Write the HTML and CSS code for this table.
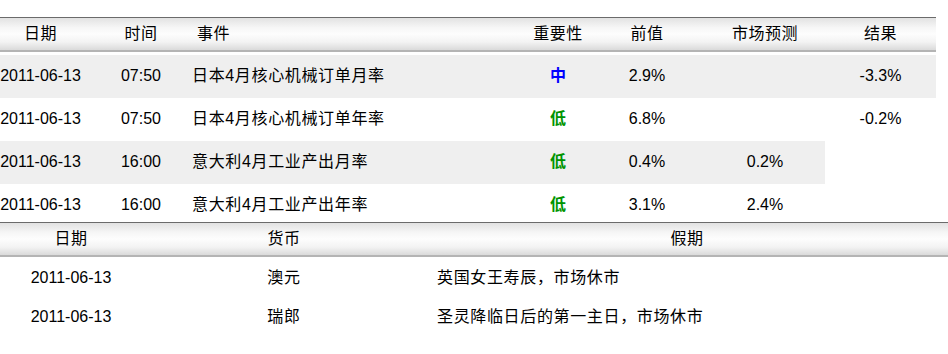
FILE: index.html
```html
<!DOCTYPE html>
<html lang="zh-CN">
<head>
<meta charset="utf-8">
<title>财经日历</title>
<link rel="stylesheet" href="styles.css">
</head>
<body>
<div class="events">
  <div class="ev-row head">
    <span>日期</span><span>时间</span><span class="ev-name">事件</span><span>重要性</span><span>前值</span><span>市场预测</span><span>结果</span>
  </div>
  <div class="ev-row alt">
    <span>2011-06-13</span><span>07:50</span><span class="ev-name">日本4月核心机械订单月率</span><span class="lvl mid">中</span><span>2.9%</span><span></span><span>-3.3%</span>
  </div>
  <div class="ev-row">
    <span>2011-06-13</span><span>07:50</span><span class="ev-name">日本4月核心机械订单年率</span><span class="lvl low">低</span><span>6.8%</span><span></span><span>-0.2%</span>
  </div>
  <div class="ev-row alt">
    <span>2011-06-13</span><span>16:00</span><span class="ev-name">意大利4月工业产出月率</span><span class="lvl low">低</span><span>0.4%</span><span>0.2%</span>
  </div>
  <div class="ev-row last">
    <span>2011-06-13</span><span>16:00</span><span class="ev-name">意大利4月工业产出年率</span><span class="lvl low">低</span><span>3.1%</span><span>2.4%</span>
  </div>
</div>
<div class="holidays">
  <div class="hd-row head">
    <span>日期</span><span>货币</span><span>假期</span>
  </div>
  <div class="hd-row">
    <span>2011-06-13</span><span class="cjk">澳元</span><span class="hd-name cjk">英国女王寿辰，市场休市</span>
  </div>
  <div class="hd-row">
    <span>2011-06-13</span><span class="cjk">瑞郎</span><span class="hd-name cjk">圣灵降临日后的第一主日，市场休市</span>
  </div>
</div>
</body>
</html>
```
FILE: styles.css
```css
html, body {
  margin: 0;
  padding: 0;
  background: #fff;
}
body {
  font-family: "Liberation Sans", "Noto Sans CJK SC", sans-serif;
  font-size: 16px;
  color: #000;
  overflow: hidden;
}
.events {
  margin: 17px 0 0 -19px;
  width: 955px;
}
.ev-row {
  display: grid;
  grid-template-columns: 119px 82px 345px 62px 116px 120px 111px;
  height: 43px;
}
.ev-row > span,
.hd-row > span {
  text-align: center;
  padding-top: 10px;
  line-height: 21px;
  white-space: nowrap;
}
.ev-row.alt > span {
  background: #efefef;
}
.ev-row.last {
  height: 38px;
}
.ev-name {
  text-align: left !important;
  padding-left: 10px;
  letter-spacing: 0.65px;
}
.cjk {
  letter-spacing: 0.65px;
}
.head {
  height: 32px !important;
  border-top: 1px solid #6b6b6b;
  border-bottom: 2px solid #b4b4b4;
  background: linear-gradient(#e2e2e2 0%, #f6f6f6 30%, #fdfdfd 50%, #f3f3f3 75%, #dadada 100%);
}
.ev-row.head {
  margin-bottom: 3px;
}
.head > span {
  padding-top: 0 !important;
  line-height: 32px !important;
  letter-spacing: 0.5px;
}
.ev-row.head .ev-name {
  padding-left: 15px;
}
.lvl {
  font-weight: bold;
}
.lvl.mid {
  color: #0000ff;
}
.lvl.low {
  color: #009400;
}
.holidays {
  width: 948px;
}
.hd-row {
  display: grid;
  grid-template-columns: 142px 284px 522px;
  height: 39px;
}
.hd-row:not(.head) .hd-name {
  text-align: left;
  padding-left: 11px;
}
```
